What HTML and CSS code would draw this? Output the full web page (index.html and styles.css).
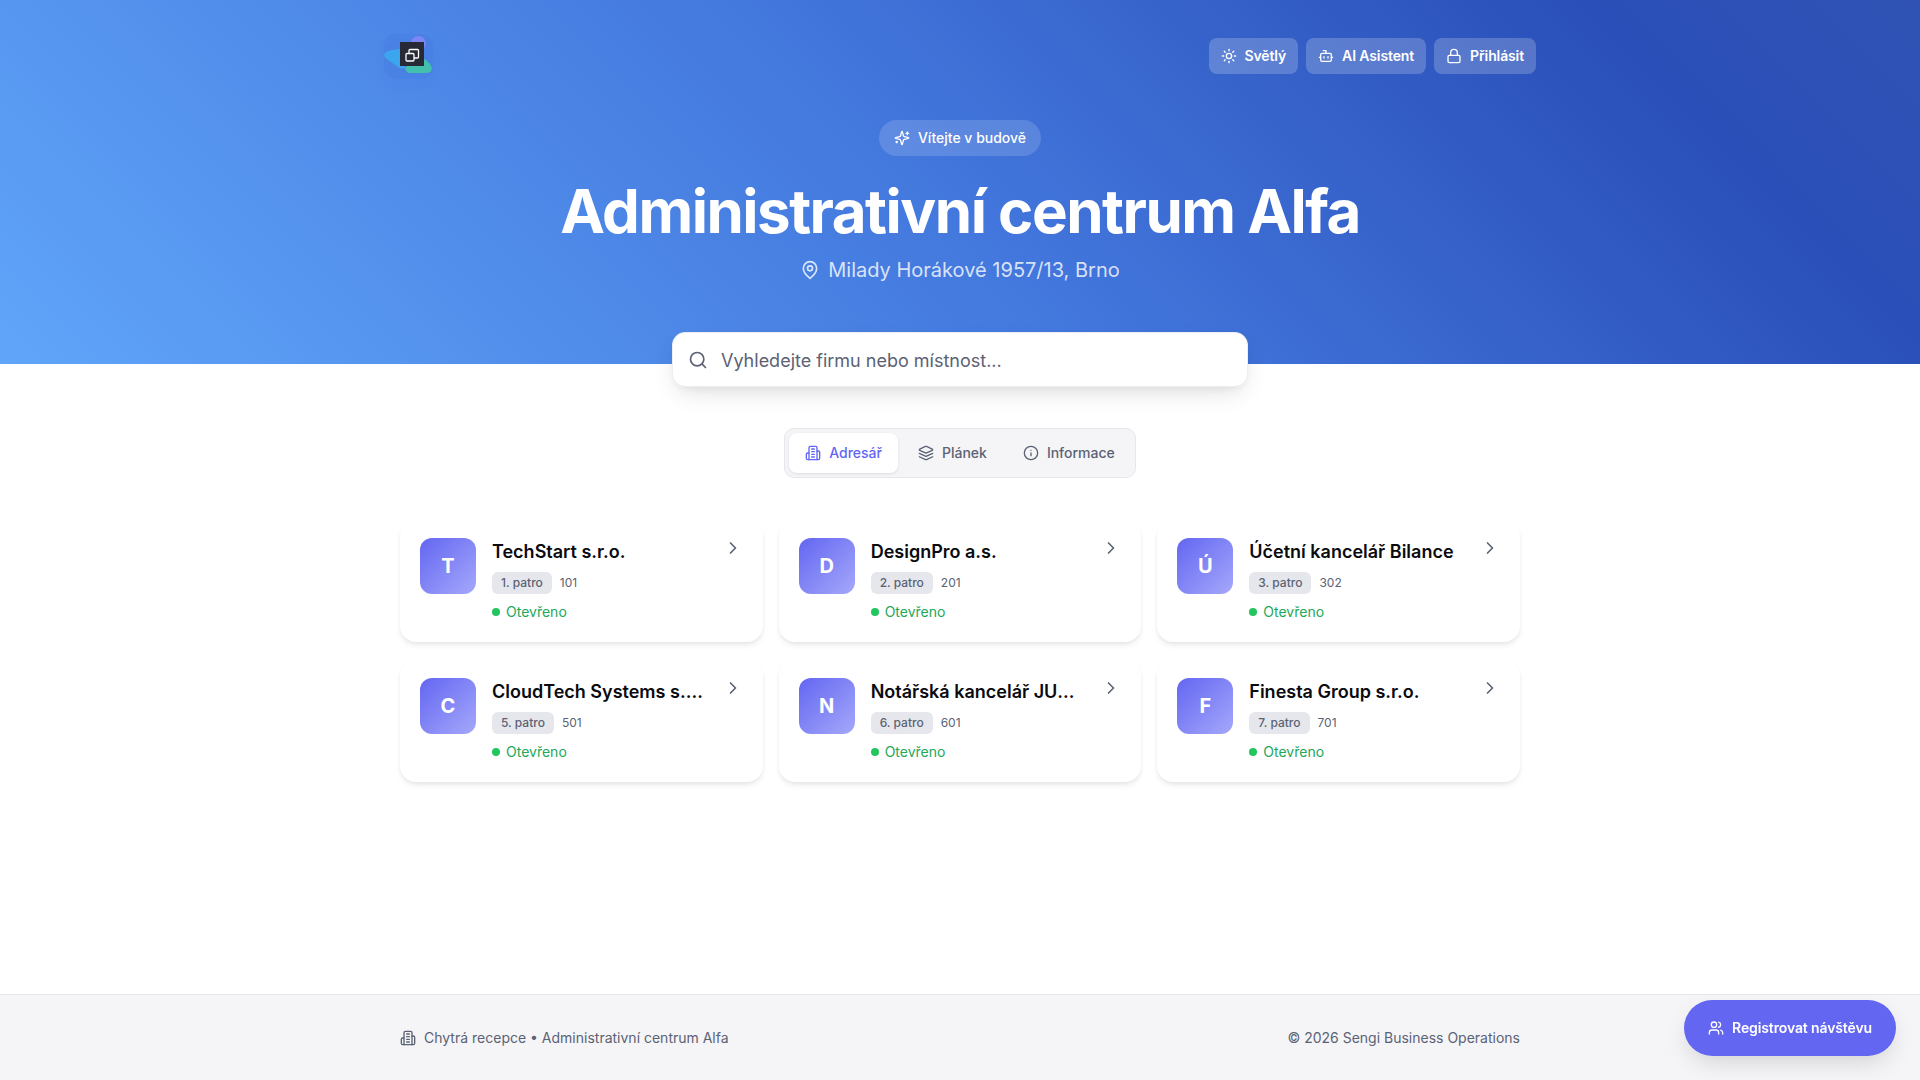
FILE: index.html
```html
<!DOCTYPE html>
<html lang="cs">
<head>
<meta charset="utf-8">
<title>Administrativní centrum Alfa</title>
<link rel="stylesheet" href="styles.css">
</head>
<body>
<svg class="sprite" aria-hidden="true">
  <symbol id="i-building" viewBox="0 0 24 24"><path d="M6 22V4a2 2 0 0 1 2-2h8a2 2 0 0 1 2 2v18Z"/><path d="M6 12H4a2 2 0 0 0-2 2v6a2 2 0 0 0 2 2h2"/><path d="M18 9h2a2 2 0 0 1 2 2v9a2 2 0 0 1-2 2h-2"/><path d="M10 6h4"/><path d="M10 10h4"/><path d="M10 14h4"/><path d="M10 18h4"/></symbol>
  <symbol id="i-chevron" viewBox="0 0 24 24"><path d="m9 18 6-6-6-6"/></symbol>
</svg>

<header class="hero">
  <div class="topbar">
    <div class="logo">
      <svg class="logo-mark" width="52" height="52" viewBox="384 32 52 52">
        <rect class="logo-base" x="384" y="34" width="49" height="45" rx="12"/>
        <circle cx="418.300" cy="43.500" r="7.500" fill="#7b86f2"/>
        <path d="M387 51.500L398 48.800Q400 48.500 400.500 50.500L405 68.500L402 68.500Q400 68.500 398 67L386 58.500Q384 57 384.300 54.500Q384.800 52 387 51.500Z" fill="#3ba6ee"/>
        <path d="M405 68L415 60Q421 56 426 60L430 64Q432.500 67 431.500 70Q430.500 73 427 73L410 73Q406 73 405 68Z" fill="#43bfae"/>
        <rect x="400" y="42" width="24" height="24" fill="#272a36"/>
        <g fill="none" stroke="#fff" stroke-width="1.300"><rect x="409" y="49.500" width="9.500" height="8.500" rx="1"/><rect x="406" y="53.500" width="8" height="7.500" rx="1" fill="#272a36"/></g>
      </svg>
    </div>
    <nav class="actions">
      <button class="action"><svg class="ic16" viewBox="0 0 24 24"><circle cx="12" cy="12" r="4"/><path d="M12 2v2"/><path d="M12 20v2"/><path d="m4.930 4.930 1.410 1.410"/><path d="m17.660 17.660 1.410 1.410"/><path d="M2 12h2"/><path d="M20 12h2"/><path d="m6.340 17.660-1.410 1.410"/><path d="m19.070 4.930-1.410 1.410"/></svg>Světlý</button>
      <button class="action"><svg class="ic16" viewBox="0 0 24 24"><path d="M12 8V4H8"/><rect width="16" height="12" x="4" y="8" rx="2"/><path d="M2 14h2"/><path d="M20 14h2"/><path d="M15 13v2"/><path d="M9 13v2"/></svg>AI Asistent</button>
      <button class="action"><svg class="ic16" viewBox="0 0 24 24"><rect width="18" height="11" x="3" y="11" rx="2" ry="2"/><path d="M7 11V7a5 5 0 0 1 10 0v4"/></svg>Přihlásit</button>
    </nav>
  </div>
  <div class="hero-copy">
    <div class="welcome"><svg class="ic16" viewBox="0 0 24 24"><path d="M9.937 15.500A2 2 0 0 0 8.500 14.063l-6.135-1.582a.5.5 0 0 1 0-.962L8.500 9.936A2 2 0 0 0 9.937 8.500l1.582-6.135a.5.5 0 0 1 .963 0L14.063 8.500A2 2 0 0 0 15.500 9.937l6.135 1.581a.5.5 0 0 1 0 .964L15.500 14.063a2 2 0 0 0-1.437 1.437l-1.582 6.135a.5.5 0 0 1-.963 0z"/><path d="M20 3v4"/><path d="M22 5h-4"/><path d="M4 17v2"/><path d="M5 18H3"/></svg>Vítejte v budově</div>
    <h1>Administrativní centrum Alfa</h1>
    <p class="address"><svg class="ic20" viewBox="0 0 24 24"><path d="M20 10c0 6-8 12-8 12s-8-6-8-12a8 8 0 0 1 16 0Z"/><circle cx="12" cy="10" r="3"/></svg>Milady Horákové 1957/13, Brno</p>
  </div>
</header>

<main class="main">
  <div class="search">
    <svg class="ic20 search-icon" viewBox="0 0 24 24"><circle cx="11" cy="11" r="8"/><path d="m21 21-4.300-4.300"/></svg>
    <input class="search-input" type="text" placeholder="Vyhledejte firmu nebo místnost...">
  </div>

  <div class="tabs">
    <button class="tab active"><svg class="ic16"><use href="#i-building"/></svg>Adresář</button>
    <button class="tab"><svg class="ic16" viewBox="0 0 24 24"><path d="m12.830 2.180a2 2 0 0 0-1.660 0L2.600 6.080a1 1 0 0 0 0 1.830l8.580 3.910a2 2 0 0 0 1.660 0l8.580-3.900a1 1 0 0 0 0-1.830Z"/><path d="m22 17.650-9.170 4.160a2 2 0 0 1-1.660 0L2 17.650"/><path d="m22 12.650-9.170 4.160a2 2 0 0 1-1.660 0L2 12.650"/></svg>Plánek</button>
    <button class="tab"><svg class="ic16" viewBox="0 0 24 24"><circle cx="12" cy="12" r="10"/><path d="M12 16v-4"/><path d="M12 8h.01"/></svg>Informace</button>
  </div>

  <section class="grid">
    <article class="card"><div class="avatar">T</div><div class="info"><h2>TechStart s.r.o.</h2><div class="meta"><span class="floor">1. patro</span><span class="room">101</span></div><div class="status"><i class="dot"></i>Otevřeno</div></div><svg class="ic20 chev"><use href="#i-chevron"/></svg></article>
    <article class="card"><div class="avatar">D</div><div class="info"><h2>DesignPro a.s.</h2><div class="meta"><span class="floor">2. patro</span><span class="room">201</span></div><div class="status"><i class="dot"></i>Otevřeno</div></div><svg class="ic20 chev"><use href="#i-chevron"/></svg></article>
    <article class="card"><div class="avatar">Ú</div><div class="info"><h2>Účetní kancelář Bilance</h2><div class="meta"><span class="floor">3. patro</span><span class="room">302</span></div><div class="status"><i class="dot"></i>Otevřeno</div></div><svg class="ic20 chev"><use href="#i-chevron"/></svg></article>
    <article class="card"><div class="avatar">C</div><div class="info"><h2>CloudTech Systems s.r.o.</h2><div class="meta"><span class="floor">5. patro</span><span class="room">501</span></div><div class="status"><i class="dot"></i>Otevřeno</div></div><svg class="ic20 chev"><use href="#i-chevron"/></svg></article>
    <article class="card"><div class="avatar">N</div><div class="info"><h2>Notářská kancelář JUDr. Nováka</h2><div class="meta"><span class="floor">6. patro</span><span class="room">601</span></div><div class="status"><i class="dot"></i>Otevřeno</div></div><svg class="ic20 chev"><use href="#i-chevron"/></svg></article>
    <article class="card"><div class="avatar">F</div><div class="info"><h2>Finesta Group s.r.o.</h2><div class="meta"><span class="floor">7. patro</span><span class="room">701</span></div><div class="status"><i class="dot"></i>Otevřeno</div></div><svg class="ic20 chev"><use href="#i-chevron"/></svg></article>
  </section>
</main>

<footer class="footer">
  <div class="footer-inner">
    <span class="footer-left"><svg class="ic16"><use href="#i-building"/></svg>Chytrá recepce • Administrativní centrum Alfa</span>
    <span>© 2026 Sengi Business Operations</span>
  </div>
</footer>

<button class="fab"><svg class="ic16" viewBox="0 0 24 24"><path d="M16 21v-2a4 4 0 0 0-4-4H6a4 4 0 0 0-4 4v2"/><circle cx="9" cy="7" r="4"/><path d="M22 21v-2a4 4 0 0 0-3-3.870"/><path d="M16 3.130a4 4 0 0 1 0 7.750"/></svg>Registrovat návštěvu</button>
</body>
</html>
```

FILE: styles.css
```css
* { box-sizing: border-box; }
html, body { height: 100%; }
body {
  margin: 0;
  min-height: 100vh;
  display: flex;
  flex-direction: column;
  background: #fff;
  color: #0a0a0f;
  font-family: Inter, "Liberation Sans", sans-serif;
}
button { font-family: inherit; border: 0; cursor: pointer; }
.sprite { position: absolute; width: 0; height: 0; }
svg { flex: none; }
.sprite symbol, .ic16, .ic20 {
  fill: none;
  stroke: currentColor;
  stroke-width: 2;
  stroke-linecap: round;
  stroke-linejoin: round;
}
.ic16 { width: 16px; height: 16px; }
.ic20 { width: 20px; height: 20px; }

.hero {
  height: 364px;
  flex: none;
  background: linear-gradient(45deg, #60a5fa 0%, #4276dc 50%, #2a4fb8 85%, #2f52b4 100%);
  color: #fff;
}
.topbar {
  width: 1200px;
  margin: 0 auto;
  padding: 32px 24px 0;
  display: flex;
  justify-content: space-between;
  align-items: flex-start;
}
.logo { height: 52px; }
.logo-mark { display: block; overflow: visible; }
.logo-base {
  fill: rgba(62, 104, 222, 0.15);
  filter: drop-shadow(0 6px 6px rgba(30, 50, 130, 0.12));
}
.actions { display: flex; gap: 8px; padding-top: 6px; }
.action {
  height: 36px;
  padding: 0 12px;
  display: flex;
  align-items: center;
  gap: 8px;
  border-radius: 8px;
  background: rgba(255, 255, 255, 0.2);
  color: #fff;
  font-size: 14px;
  line-height: 20px;
  font-weight: 600;
  letter-spacing: -0.12px;
}
.hero-copy {
  display: flex;
  flex-direction: column;
  align-items: center;
  margin-top: 36px;
}
.welcome {
  height: 36px;
  padding: 0 15px;
  display: flex;
  align-items: center;
  gap: 8px;
  border-radius: 18px;
  background: rgba(255, 255, 255, 0.15);
  font-size: 14px;
  line-height: 20px;
  font-weight: 500;
}
h1 {
  margin: 21px 0 0;
  font-size: 60px;
  line-height: 68px;
  font-weight: 700;
  letter-spacing: -1.5px;
  color: #fff;
}
.address {
  margin: 10px 0 0;
  display: flex;
  align-items: center;
  gap: 8px;
  font-size: 20px;
  line-height: 30px;
  color: rgba(255, 255, 255, 0.8);
}

.main { flex: 1; display: flex; flex-direction: column; align-items: center; }
.search {
  position: relative;
  width: 576px;
  margin-top: -32px;
}
.search-icon {
  position: absolute;
  left: 16px;
  top: 18px;
  color: #5b6274;
}
.search-input {
  display: block;
  width: 100%;
  height: 55px;
  padding: 2px 16px 0 48px;
  border: 1px solid #eceef2;
  border-radius: 13px;
  background: #fff;
  font-family: inherit;
  font-size: 18px;
  color: #0a0a0f;
  box-shadow: 0 10px 25px -5px rgba(0, 0, 0, 0.12), 0 4px 10px -4px rgba(0, 0, 0, 0.08);
}
.search-input::placeholder { color: #5b6274; opacity: 1; }

.tabs {
  margin-top: 41px;
  display: flex;
  gap: 4px;
  padding: 4px;
  border: 1px solid #e5e7eb;
  border-radius: 10px;
  background: #f5f5f8;
}
.tab {
  height: 40px;
  padding: 0 16px;
  display: flex;
  align-items: center;
  gap: 8px;
  border-radius: 8px;
  background: transparent;
  color: #5b6274;
  font-size: 14px;
  line-height: 20px;
  font-weight: 500;
}
.tab.active {
  background: #fff;
  color: #6366f1;
  box-shadow: 0 1px 3px rgba(0, 0, 0, 0.1);
}

.grid {
  width: 1120px;
  margin-top: 42px;
  display: grid;
  grid-template-columns: repeat(3, minmax(0, 1fr));
  gap: 16px;
  row-gap: 18px;
}
.card {
  height: 122px;
  padding: 18px 20px;
  display: flex;
  gap: 16px;
  align-items: flex-start;
  border-radius: 16px;
  background: #fff;
  box-shadow: 0 4px 6px -1px rgba(0, 0, 0, 0.08), 0 2px 4px -1px rgba(0, 0, 0, 0.05);
}
.avatar {
  width: 56px;
  height: 56px;
  flex: none;
  display: flex;
  align-items: center;
  justify-content: center;
  border-radius: 12px;
  background: linear-gradient(135deg, #6366f1, #a5a8fa);
  color: #fff;
  font-size: 20px;
  font-weight: 700;
}
.info { flex: 1; min-width: 0; }
h2 {
  margin: 0 0 7px;
  font-size: 18px;
  line-height: 27px;
  font-weight: 600;
  white-space: nowrap;
  overflow: hidden;
  text-overflow: ellipsis;
  color: #0a0a0f;
}
.meta { display: flex; align-items: center; gap: 8px; margin-bottom: 8px; }
.floor {
  height: 22px;
  padding: 0 9px;
  display: flex;
  align-items: center;
  border-radius: 6px;
  background: #e5e7ec;
  color: #5b6274;
  font-size: 12px;
  line-height: 16px;
  font-weight: 500;
}
.room { font-size: 12px; line-height: 16px; color: #5b6274; }
.status {
  display: flex;
  align-items: center;
  gap: 6px;
  font-size: 14px;
  line-height: 20px;
  color: #22a85a;
}
.dot { width: 8px; height: 8px; border-radius: 50%; background: #22c55e; }
.chev { color: #5b6274; }

.footer {
  height: 86px;
  flex: none;
  border-top: 1px solid #e5e7eb;
  background: #f5f5f8;
  color: #5b6274;
  font-size: 14px;
  display: flex;
  align-items: center;
}
.footer-inner {
  width: 1120px;
  margin: 0 auto;
  display: flex;
  justify-content: space-between;
  align-items: center;
}
.footer-left { display: flex; align-items: center; gap: 8px; }

.fab {
  position: fixed;
  right: 24px;
  bottom: 24px;
  height: 56px;
  padding: 0 24px;
  display: flex;
  align-items: center;
  gap: 8px;
  border-radius: 28px;
  background: #6366f1;
  color: #fff;
  font-size: 14px;
  line-height: 20px;
  font-weight: 600;
  letter-spacing: -0.12px;
  box-shadow: 0 10px 25px -5px rgba(0, 0, 0, 0.15);
}
```
